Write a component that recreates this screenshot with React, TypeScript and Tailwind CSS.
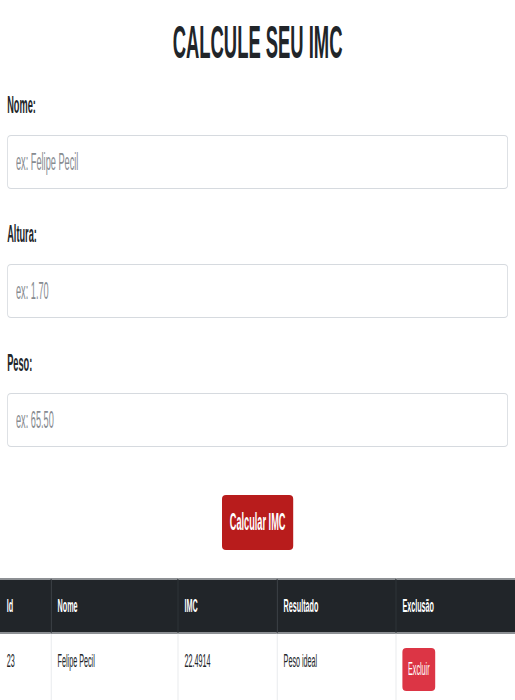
const fields = [
  { id: 'nome', label: 'Nome:', placeholder: 'ex: Felipe Pecil' },
  { id: 'altura', label: 'Altura:', placeholder: 'ex: 1.70' },
  { id: 'peso', label: 'Peso:', placeholder: 'ex: 65.50' },
]

const rows = [{ id: 23, nome: 'Felipe Pecil', imc: '22.4914', resultado: 'Peso ideal' }]

export default function App() {
  return (
    <div className="h-screen w-full overflow-hidden bg-white font-['Liberation_Sans',Arial,sans-serif] text-[#212529]">
      {/* the page is drawn wide and squeezed horizontally */}
      <div className="w-[1288px] origin-top-left scale-x-[0.4]">
        <h1 className="pt-[15px] text-center text-[46px] font-bold leading-[55px]">CALCULE SEU IMC</h1>

        <form className="mt-[19px] px-[18px]" onSubmit={(e) => e.preventDefault()}>
          <div className="flex flex-col gap-[29px]">
            {fields.map((f) => (
              <div key={f.id}>
                <label htmlFor={f.id} className="block text-[23px] font-bold leading-[33px]">
                  {f.label}
                </label>
                <input
                  id={f.id}
                  type="text"
                  placeholder={f.placeholder}
                  className="mt-[13px] block h-[54px] w-full rounded-[10px/4px] border border-x-[2.5px] border-[#d6dadf] bg-white px-[20px] text-[23px] outline-none placeholder:text-[#878b90]"
                />
              </div>
            ))}
          </div>

          <div className="mt-[48px] flex justify-center">
            <button
              type="submit"
              className="h-[55px] rounded-[10px/4px] bg-[#b81c1c] px-[19px] text-[23px] font-bold text-white"
            >
              Calcular IMC
            </button>
          </div>
        </form>

        <table className="mt-[28px] w-full table-fixed border-collapse text-left text-[18px]">
          <colgroup>
            <col className="w-[128px]" />
            <col className="w-[317px]" />
            <col className="w-[248px]" />
            <col className="w-[297px]" />
            <col />
          </colgroup>
          <thead>
            <tr className="border-y-2 border-[#8d9094] bg-[#212529] text-white">
              {['Id', 'Nome', 'IMC', 'Resultado', 'Exclusão'].map((h, i) => (
                <th
                  key={h}
                  className={`h-[54px] align-middle font-bold ${i > 0 ? 'border-l-[2.5px] border-[#32383e] px-[15px]' : 'px-[17px]'}`}
                >
                  {h}
                </th>
              ))}
            </tr>
          </thead>
          <tbody>
            {rows.map((r) => (
              <tr key={r.id}>
                <td className="px-[17px] pt-[14px] pb-[16px] align-top leading-[27px]">{r.id}</td>
                <td className="border-l-[2.5px] border-[#e3e6e9] px-[15px] pt-[14px] pb-[16px] align-top leading-[27px]">{r.nome}</td>
                <td className="border-l-[2.5px] border-[#e3e6e9] px-[15px] pt-[14px] pb-[16px] align-top leading-[27px]">{r.imc}</td>
                <td className="border-l-[2.5px] border-[#e3e6e9] px-[15px] pt-[14px] pb-[16px] align-top leading-[27px]">{r.resultado}</td>
                <td className="border-l-[2.5px] border-[#e3e6e9] px-[15px] pt-[14px] pb-[16px] align-top">
                  <button className="h-[43px] rounded-[10px/4px] bg-[#dc3545] px-[14px] text-[18px] text-white">Excluir</button>
                </td>
              </tr>
            ))}
          </tbody>
        </table>
      </div>
    </div>
  )
}
